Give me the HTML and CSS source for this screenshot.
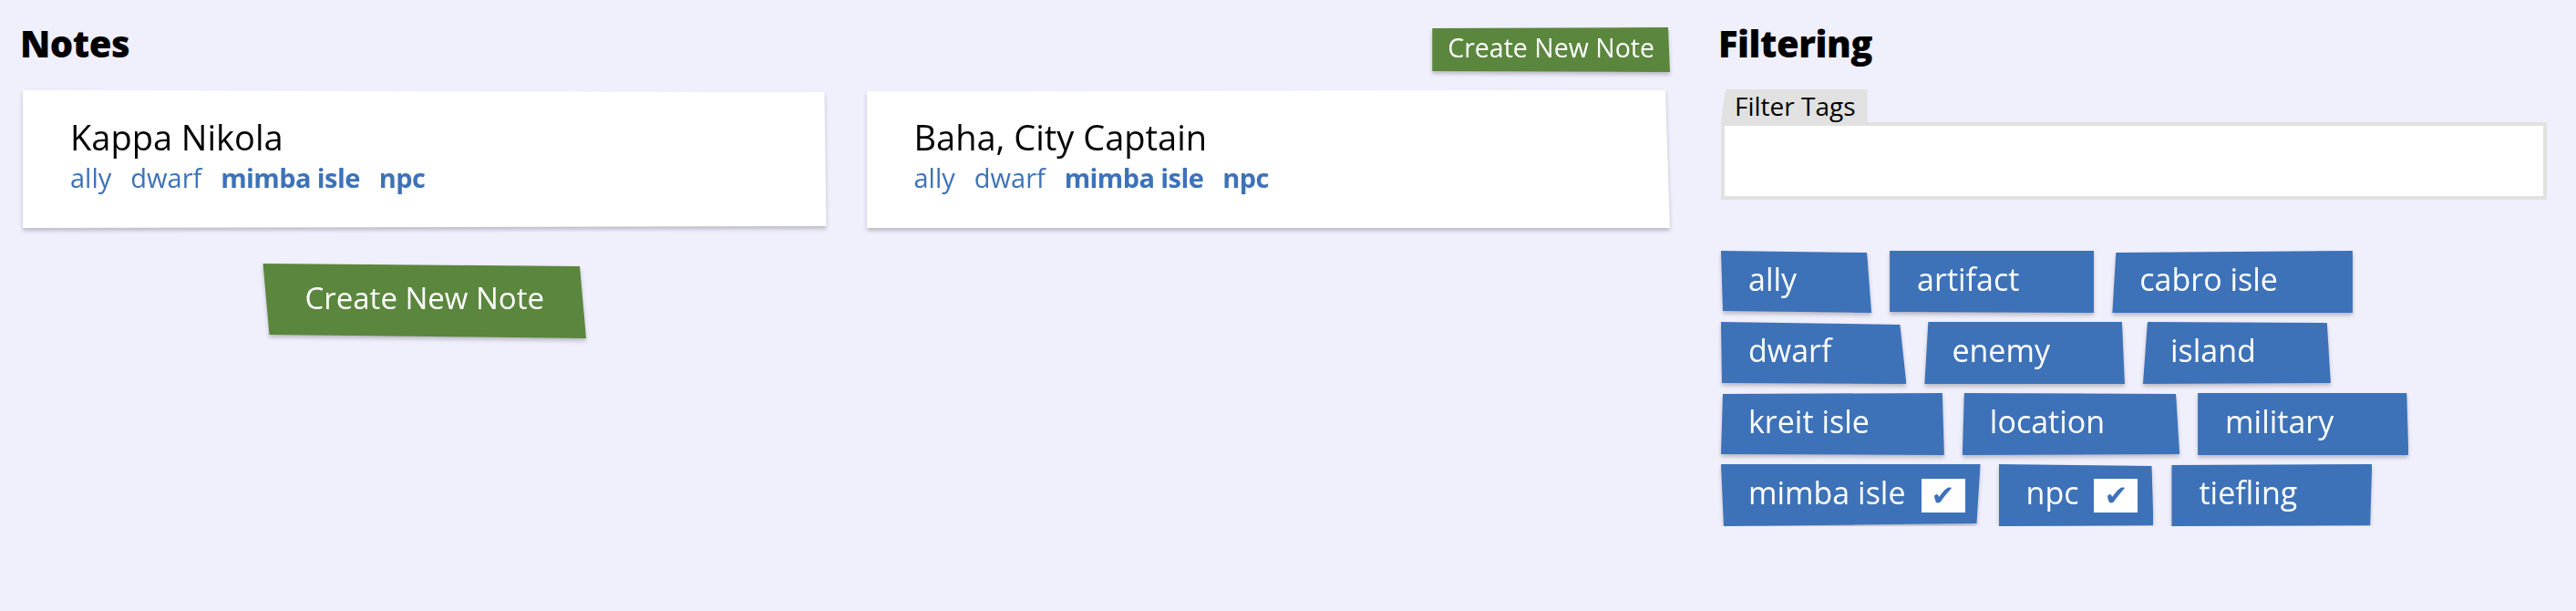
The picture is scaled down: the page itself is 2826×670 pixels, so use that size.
FILE: index.html
```html
<!DOCTYPE html>
<html lang="en">
<head>
<meta charset="utf-8">
<title>Notes</title>
<link rel="stylesheet" href="styles.css">
</head>
<body>
<div class="page">
  <section class="notes">
    <header class="notes-header">
      <h1 class="title">Notes</h1>
      <div class="shadow header-action"><button class="btn btn-small">Create New Note</button></div>
    </header>
    <div class="note-grid">
      <div class="shadow">
        <article class="note note-a">
          <h2 class="note-title">Kappa Nikola</h2>
          <div class="note-tags">
            <span class="note-tag">ally</span>
            <span class="note-tag">dwarf</span>
            <span class="note-tag active">mimba isle</span>
            <span class="note-tag active">npc</span>
          </div>
        </article>
      </div>
      <div class="shadow">
        <article class="note note-b">
          <h2 class="note-title">Baha, City Captain</h2>
          <div class="note-tags">
            <span class="note-tag">ally</span>
            <span class="note-tag">dwarf</span>
            <span class="note-tag active">mimba isle</span>
            <span class="note-tag active">npc</span>
          </div>
        </article>
      </div>
      <div class="shadow create-wrap"><button class="btn btn-large">Create New Note</button></div>
    </div>
  </section>
  <aside class="filtering">
    <h1 class="title">Filtering</h1>
    <label class="filter-label" for="filter">Filter Tags</label>
    <input class="filter-input" id="filter" type="text">
    <ul class="tag-list">
      <li class="shadow tag-item"><span class="tag"><span class="tag-name">ally</span><span class="check">✔</span></span></li>
      <li class="shadow tag-item"><span class="tag"><span class="tag-name">artifact</span><span class="check">✔</span></span></li>
      <li class="shadow tag-item"><span class="tag"><span class="tag-name">cabro isle</span><span class="check">✔</span></span></li>
      <li class="shadow tag-item"><span class="tag"><span class="tag-name">dwarf</span><span class="check">✔</span></span></li>
      <li class="shadow tag-item"><span class="tag"><span class="tag-name">enemy</span><span class="check">✔</span></span></li>
      <li class="shadow tag-item"><span class="tag"><span class="tag-name">island</span><span class="check">✔</span></span></li>
      <li class="shadow tag-item"><span class="tag"><span class="tag-name">kreit isle</span><span class="check">✔</span></span></li>
      <li class="shadow tag-item"><span class="tag"><span class="tag-name">location</span><span class="check">✔</span></span></li>
      <li class="shadow tag-item"><span class="tag"><span class="tag-name">military</span><span class="check">✔</span></span></li>
      <li class="shadow tag-item selected"><span class="tag"><span class="tag-name">mimba isle</span><span class="check">✔</span></span></li>
      <li class="shadow tag-item selected"><span class="tag"><span class="tag-name">npc</span><span class="check">✔</span></span></li>
      <li class="shadow tag-item"><span class="tag"><span class="tag-name">tiefling</span><span class="check">✔</span></span></li>
    </ul>
  </aside>
</div>
</body>
</html>
```

FILE: styles.css
```css
body {
  margin: 0;
  background: #f0effc;
  font-family: "Open Sans", "Liberation Sans", sans-serif;
  color: #000;
}

.page {
  display: flex;
  gap: 56px;
  padding: 0 32px 0 25px;
}

.notes {
  flex: 1;
  min-width: 0;
}

.filtering {
  width: 906px;
  flex: none;
  padding-top: 24px;
}

.title {
  margin: 0 0 0 -3px;
  font-size: 40px;
  line-height: 48px;
  font-weight: 800;
  letter-spacing: -0.5px;
}

.notes-header {
  display: flex;
  justify-content: space-between;
  align-items: flex-start;
  height: 99px;
  box-sizing: border-box;
  padding-top: 24px;
}

.header-action {
  margin-top: 6px;
}

.shadow {
  filter: drop-shadow(0 3px 2px rgba(0, 0, 0, 0.22));
}

.btn {
  display: block;
  border: 0;
  margin: 0;
  background: #5b863e;
  color: #fff;
  font-family: inherit;
  font-weight: 400;
  cursor: pointer;
}

.btn-small {
  font-size: 28.5px;
  line-height: 38px;
  padding: 3px 17px 8px;
  clip-path: polygon(0 1px, calc(100% - 2px) 0, 100% 100%, 0 calc(100% - 1px));
}

.btn-large {
  font-size: 33px;
  line-height: 44px;
  padding: 16px 46px 22px;
  clip-path: polygon(0 0, calc(100% - 7px) 3px, 100% 100%, 7px calc(100% - 4px));
}

.note-grid {
  display: grid;
  grid-template-columns: 1fr 1fr;
  column-gap: 44px;
  row-gap: 39px;
}

.create-wrap {
  justify-self: center;
}

.note {
  background: #fff;
  padding: 28px 52px 36px;
}

.note-a {
  clip-path: polygon(0 0, calc(100% - 2px) 2px, 100% calc(100% - 2px), 0 100%);
}

.note-b {
  clip-path: polygon(0 1px, calc(100% - 5px) 0, 100% 100%, 0 100%);
}

.note-title {
  margin: 0;
  font-size: 38px;
  line-height: 46px;
  font-weight: 400;
}

.note-tags {
  display: flex;
  gap: 21px;
  padding-top: 3px;
  font-size: 29px;
  line-height: 38px;
  color: #3d72b9;
}

.note-tag.active {
  font-weight: 700;
  letter-spacing: -0.6px;
}

.filter-label {
  display: block;
  width: fit-content;
  margin-top: 26px;
  background: #e1e1e1;
  font-size: 28px;
  line-height: 36px;
  padding: 0 13px 0 15px;
  clip-path: polygon(5px 0, 100% 0, 100% 100%, 0 100%);
}

.filter-input {
  display: block;
  width: 100%;
  height: 85px;
  box-sizing: border-box;
  margin: 0;
  border: 4px solid #e1e1e1;
  background: #fff;
  outline: none;
  font: inherit;
}

.tag-list {
  list-style: none;
  margin: 56px 0 0;
  padding: 0;
  max-width: 860px;
  display: flex;
  flex-wrap: wrap;
  gap: 10px 20px;
}

.tag {
  display: flex;
  align-items: center;
  gap: 17px;
  height: 68px;
  box-sizing: border-box;
  padding: 0 17px 0 30px;
  background: #3d72b9;
  color: #fff;
  font-size: 34px;
  line-height: 44px;
}

.tag-name {
  margin-bottom: 7px;
}

.check {
  display: flex;
  align-items: center;
  justify-content: center;
  width: 48px;
  height: 37px;
  background: #fff;
  color: #3d72b9;
  font-family: "DejaVu Sans", sans-serif;
  font-size: 31px;
  font-style: italic;
  line-height: 1;
  visibility: hidden;
}

.tag-item.selected .check {
  visibility: visible;
}

.tag-item:nth-child(1) .tag { clip-path: polygon(0 0, calc(100% - 5px) 2px, 100% 100%, 2px calc(100% - 2px)); }
.tag-item:nth-child(2) .tag { clip-path: polygon(0 0, 100% 0, 100% 100%, 0 calc(100% - 1px)); }
.tag-item:nth-child(3) .tag { clip-path: polygon(4px 2px, 100% 0, 100% 100%, 0 100%); }
.tag-item:nth-child(4) .tag { clip-path: polygon(0 0, calc(100% - 7px) 3px, 100% 100%, 1px calc(100% - 1px)); }
.tag-item:nth-child(5) .tag { clip-path: polygon(4px 0, calc(100% - 3px) 0, 100% 100%, 0 100%); }
.tag-item:nth-child(6) .tag { clip-path: polygon(5px 0, calc(100% - 4px) 1px, 100% calc(100% - 1px), 0 100%); }
.tag-item:nth-child(7) .tag { clip-path: polygon(2px 1px, calc(100% - 2px) 0, 100% 100%, 0 calc(100% - 1px)); }
.tag-item:nth-child(8) .tag { clip-path: polygon(2px 0, calc(100% - 4px) 1px, 100% calc(100% - 1px), 0 100%); }
.tag-item:nth-child(9) .tag { clip-path: polygon(0 0, calc(100% - 2px) 0, 100% 100%, 0 100%); }
.tag-item:nth-child(10) .tag { clip-path: polygon(0 0, 100% 0, calc(100% - 4px) calc(100% - 3px), 3px 100%); }
.tag-item:nth-child(11) .tag { clip-path: polygon(0 0, calc(100% - 2px) 2px, 100% calc(100% - 1px), 0 100%); }
.tag-item:nth-child(12) .tag { clip-path: polygon(0 1px, 100% 0, calc(100% - 2px) calc(100% - 1px), 0 100%); }
```
